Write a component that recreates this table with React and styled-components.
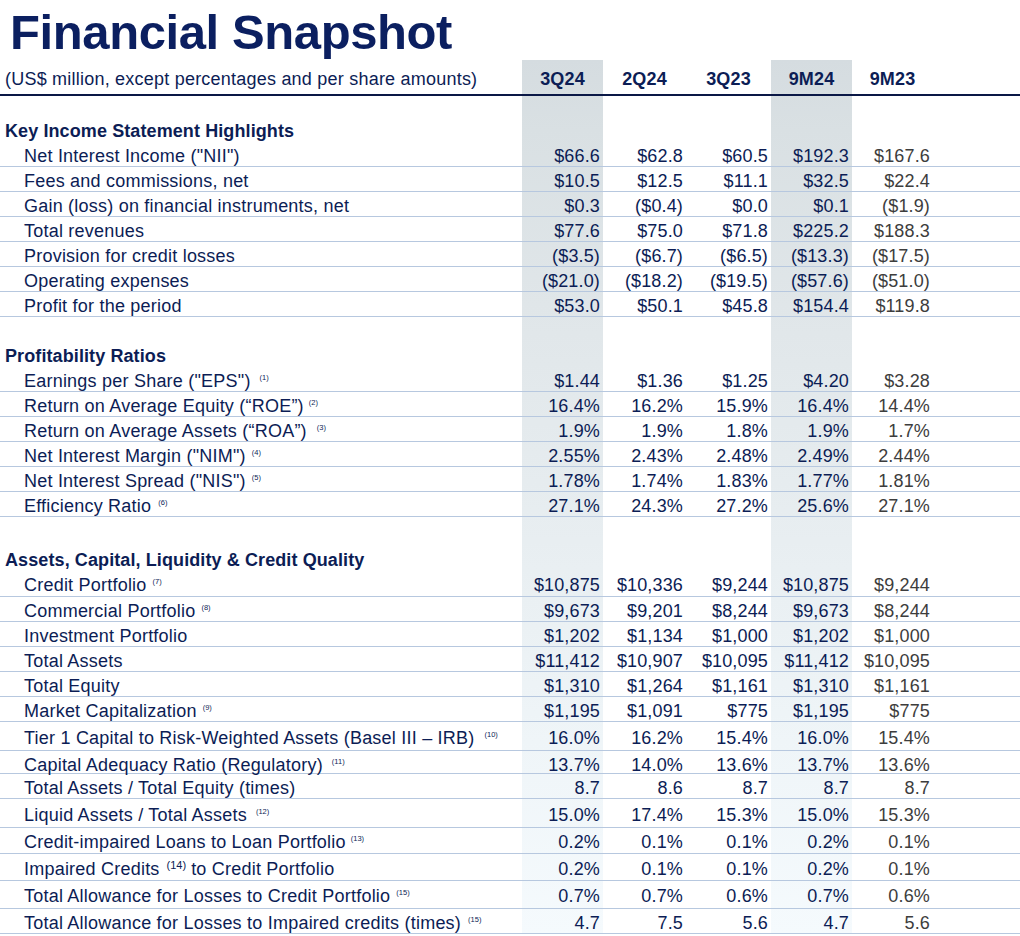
import React from 'react';
import styled, { createGlobalStyle } from 'styled-components';

const GlobalStyle = createGlobalStyle`
  html, body { margin: 0; padding: 0; background: #ffffff; }
  body { font-family: "Liberation Sans", Arial, Helvetica, sans-serif; }
`;

const NAVY = '#0c1d55';
const TITLE = '#0b1f60';
const GRAY = '#3d3d3d';
const LINE = '#b7c8df';
const COLS = '522px 81px 83px 85px 81px 81px 1fr';

const band =
  'linear-gradient(180deg, #d5dce0 0%, #d9e0e3 8%, #e0e6e9 28%, #e8eef1 55%, #eff5f8 78%, #f5fafd 100%)';

const Page = styled.div`
  width: 1020px;
  height: 936px;
  overflow: hidden;
`;

const Title = styled.h1`
  margin: 0;
  padding: 8px 0 3px 10px;
  font-size: 49px;
  line-height: 49px;
  font-weight: 700;
  letter-spacing: -0.4px;
  color: ${TITLE};
`;

const Table = styled.div`
  background-image: ${band}, ${band};
  background-repeat: no-repeat;
  background-size: 81px 100%;
  background-position: 522px 0, 771px 0;
`;

const Row = styled.div`
  display: grid;
  grid-template-columns: ${COLS};
  align-items: center;
  box-sizing: border-box;
  height: ${(p) => p.$h}px;
  padding-top: 4px;
  border-bottom: ${(p) => (p.$line ? `1px solid ${LINE}` : 'none')};
  color: ${NAVY};
  font-size: 18px;
  letter-spacing: 0.15px;
`;

const HeaderRow = styled(Row)`
  border-bottom: 2px solid #0a1846;
`;

const Spacer = styled.div`
  height: ${(p) => p.$h}px;
`;

const Label = styled.div`
  padding-left: ${(p) => (p.$indent ? 24 : 5)}px;
  font-weight: ${(p) => (p.$bold ? 700 : 400)};
  letter-spacing: ${(p) => (p.$bold ? 0.1 : 0.22)}px;
  white-space: nowrap;
`;

const Value = styled.div`
  text-align: right;
  padding-right: 3px;
  white-space: nowrap;
  color: ${(p) => (p.$muted ? GRAY : NAVY)};
`;

const ColHead = styled.div`
  text-align: center;
  font-weight: 700;
  color: ${NAVY};
`;

const Sup = styled.span`
  font-size: ${(p) => (p.$big ? 11 : 7.5)}px;
  line-height: 0;
  vertical-align: ${(p) => (p.$big ? 6 : 7)}px;
  margin-left: ${(p) => p.$gap}px;
  margin-right: ${(p) => (p.$big ? 5 : 0)}px;
  letter-spacing: 0;
`;

const headers = ['3Q24', '2Q24', '3Q23', '9M24', '9M23'];

const sections = [
  {
    title: 'Key Income Statement Highlights',
    before: 21,
    head: 25,
    rows: [
      { l: 'Net Interest Income ("NII")', v: ['$66.6', '$62.8', '$60.5', '$192.3', '$167.6'] },
      { l: 'Fees and commissions, net', v: ['$10.5', '$12.5', '$11.1', '$32.5', '$22.4'] },
      { l: 'Gain (loss) on financial instruments, net', v: ['$0.3', '($0.4)', '$0.0', '$0.1', '($1.9)'] },
      { l: 'Total revenues', v: ['$77.6', '$75.0', '$71.8', '$225.2', '$188.3'] },
      { l: 'Provision for credit losses', v: ['($3.5)', '($6.7)', '($6.5)', '($13.3)', '($17.5)'] },
      { l: 'Operating expenses', v: ['($21.0)', '($18.2)', '($19.5)', '($57.6)', '($51.0)'] },
      { l: 'Profit for the period', v: ['$53.0', '$50.1', '$45.8', '$154.4', '$119.8'] },
    ],
  },
  {
    title: 'Profitability Ratios',
    before: 25,
    head: 25,
    rows: [
      { l: 'Earnings per Share ("EPS")', n: '(1)', g: 9, v: ['$1.44', '$1.36', '$1.25', '$4.20', '$3.28'] },
      { l: 'Return on Average Equity (\u201cROE\u201d)', n: '(2)', g: 5, v: ['16.4%', '16.2%', '15.9%', '16.4%', '14.4%'] },
      { l: 'Return on Average Assets (\u201cROA\u201d)', n: '(3)', g: 10, v: ['1.9%', '1.9%', '1.8%', '1.9%', '1.7%'] },
      { l: 'Net Interest Margin ("NIM")', n: '(4)', g: 6, v: ['2.55%', '2.43%', '2.48%', '2.49%', '2.44%'] },
      { l: 'Net Interest Spread ("NIS")', n: '(5)', g: 6, v: ['1.78%', '1.74%', '1.83%', '1.77%', '1.81%'] },
      { l: 'Efficiency Ratio', n: '(6)', g: 7, v: ['27.1%', '24.3%', '27.2%', '25.6%', '27.1%'] },
    ],
  },
  {
    title: 'Assets, Capital, Liquidity & Credit Quality',
    before: 28,
    head: 26,
    rows: [
      { h: 26, l: 'Credit Portfolio', n: '(7)', g: 6, v: ['$10,875', '$10,336', '$9,244', '$10,875', '$9,244'] },
      { l: 'Commercial Portfolio', n: '(8)', g: 6, v: ['$9,673', '$9,201', '$8,244', '$9,673', '$8,244'] },
      { l: 'Investment Portfolio', v: ['$1,202', '$1,134', '$1,000', '$1,202', '$1,000'] },
      { l: 'Total Assets', v: ['$11,412', '$10,907', '$10,095', '$11,412', '$10,095'] },
      { l: 'Total Equity', v: ['$1,310', '$1,264', '$1,161', '$1,310', '$1,161'] },
      { l: 'Market Capitalization', n: '(9)', g: 6, v: ['$1,195', '$1,091', '$775', '$1,195', '$775'] },
      { h: 29, l: 'Tier 1 Capital to Risk-Weighted Assets (Basel III \u2013 IRB)', n: '(10)', g: 10, v: ['16.0%', '16.2%', '15.4%', '16.0%', '15.4%'] },
      { h: 23, l: 'Capital Adequacy Ratio (Regulatory)', n: '(11)', g: 9, v: ['13.7%', '14.0%', '13.6%', '13.7%', '13.6%'] },
      { l: 'Total Assets / Total Equity (times)', v: ['8.7', '8.6', '8.7', '8.7', '8.7'] },
      { h: 29, l: 'Liquid Assets / Total Assets', n: '(12)', g: 9, v: ['15.0%', '17.4%', '15.3%', '15.0%', '15.3%'] },
      { h: 26, l: 'Credit-impaired Loans to Loan Portfolio', n: '(13)', g: 5, v: ['0.2%', '0.1%', '0.1%', '0.2%', '0.1%'] },
      { h: 27, l: 'Impaired Credits', n: '(14)', g: 7, big: true, tail: 'to Credit Portfolio', v: ['0.2%', '0.1%', '0.1%', '0.2%', '0.1%'] },
      { h: 28, l: 'Total Allowance for Losses to Credit Portfolio', n: '(15)', g: 6, v: ['0.7%', '0.7%', '0.6%', '0.7%', '0.6%'] },
      { l: 'Total Allowance for Losses to Impaired credits (times)', n: '(15)', g: 7, v: ['4.7', '7.5', '5.6', '4.7', '5.6'] },
    ],
  },
];

function DataRow({ row }) {
  return (
    <Row $h={row.h || 25} $line>
      <Label $indent>
        {row.l}
        {row.n && (
          <Sup $gap={row.g} $big={row.big}>
            {row.n}
          </Sup>
        )}
        {row.tail}
      </Label>
      {row.v.map((val, i) => (
        <Value key={i} $muted={i === 4}>
          {val}
        </Value>
      ))}
      <div />
    </Row>
  );
}

export default function App() {
  return (
    <Page>
      <GlobalStyle />
      <Title>Financial Snapshot</Title>
      <Table>
        <HeaderRow $h={36}>
          <Label>(US$ million, except percentages and per share amounts)</Label>
          {headers.map((h) => (
            <ColHead key={h}>{h}</ColHead>
          ))}
          <div />
        </HeaderRow>
        {sections.map((s) => (
          <React.Fragment key={s.title}>
            <Spacer $h={s.before} />
            <Row $h={s.head}>
              <Label $bold>{s.title}</Label>
            </Row>
            {s.rows.map((r) => (
              <DataRow key={r.l} row={r} />
            ))}
          </React.Fragment>
        ))}
      </Table>
    </Page>
  );
}
